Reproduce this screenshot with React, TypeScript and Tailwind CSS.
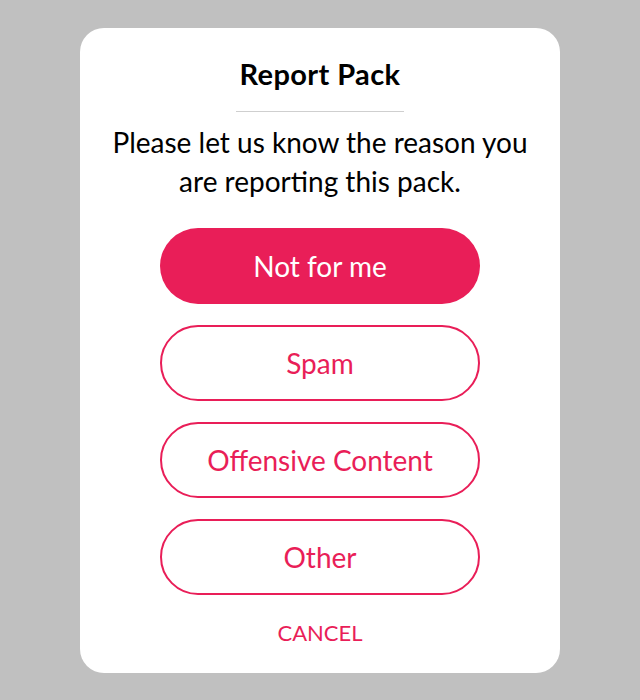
import React from 'react';

const reasons = ['Not for me', 'Spam', 'Offensive Content', 'Other'];

export default function App() {
  return (
    <div className="h-[700px] w-full bg-[#c0c0c0] pt-[28px] font-['Lato',sans-serif]">
      <div className="mx-auto flex h-[645px] w-[480px] flex-col items-center rounded-[24px] bg-white pt-[29px]">
        <h1 className="text-[29px] font-bold leading-[34px] tracking-[0.4px] text-black">Report Pack</h1>
        <div className="mt-[20px] h-px w-[168px] bg-[#cfcfcf]" />
        <p className="mt-[11px] text-center text-[28px] leading-[39px] text-black">
          Please let us know the reason you
          <br />
          are reporting this pack.
        </p>
        <div className="mt-[27px] flex flex-col gap-[21px]">
          {reasons.map((r, i) => (
            <button
              key={r}
              className={
                i === 0
                  ? 'flex h-[76px] w-[320px] items-center justify-center rounded-full bg-[#e91e58] text-[28px] text-white'
                  : 'flex h-[76px] w-[320px] items-center justify-center rounded-full border-2 border-[#e91e58] bg-white text-[28px] text-[#e91e58]'
              }
            >
              {r}
            </button>
          ))}
        </div>
        <button className="mt-[26px] text-[22px] leading-[24px] text-[#e91e58]">CANCEL</button>
      </div>
    </div>
  );
}
